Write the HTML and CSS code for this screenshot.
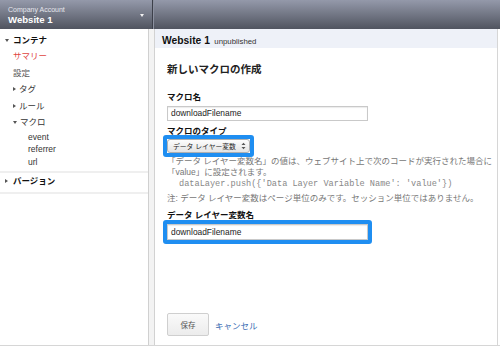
FILE: index.html
```html
<!DOCTYPE html>
<html lang="ja">
<head>
    <meta charset="UTF-8">
    <title>新しいマクロの作成</title>
    <link rel="stylesheet" href="styles.css">
</head>
<body>
    <div class="app">
        <header class="topbar">
            <div class="account">
                <div class="account-text">
                    <div class="account-label">Company Account</div>
                    <div class="account-name">Website 1</div>
                </div>
                <span class="caret"></span>
            </div>
            <div class="topbar-rest"></div>
        </header>
        <div class="layout">
            <nav class="sidebar">
                <ul class="nav">
                    <li class="nav-item head"><span class="tri down"></span>コンテナ</li>
                    <li class="nav-item sub active">サマリー</li>
                    <li class="nav-item sub light">設定</li>
                    <li class="nav-item sub"><span class="tri right"></span>タグ</li>
                    <li class="nav-item sub"><span class="tri right"></span>ルール</li>
                    <li class="nav-item sub"><span class="tri down"></span>マクロ</li>
                </ul>
                <ul class="nav-leaf">
                    <li>event</li>
                    <li>referrer</li>
                    <li>url</li>
                </ul>
                <div class="nav-sep"></div>
                <ul class="nav">
                    <li class="nav-item head"><span class="tri right"></span>バージョン</li>
                </ul>
                <div class="nav-sep"></div>
            </nav>
            <div class="gutter"></div>
            <main class="main">
                <div class="subhead"><b>Website 1</b> <span>unpublished</span></div>
                <div class="form">
                    <h1 class="form-title">新しいマクロの作成</h1>
                    <div class="field-label first">マクロ名</div>
                    <div class="text-input">downloadFilename</div>
                    <div class="field-label">マクロのタイプ</div>
                    <div class="highlight">
                        <div class="select">
                            <span>データ レイヤー変数</span>
                            <svg width="5" height="8" viewBox="0 0 5 8">
                                <path d="M0.5 3 L2.5 0.8 L4.5 3 Z M0.5 5 L2.5 7.2 L4.5 5 Z" fill="#555"/>
                            </svg>
                        </div>
                    </div>
                    <div class="help">
                        「データ レイヤー変数名」の値は、ウェブサイト上で次のコードが実行された場合に<br>
                        「value」に設定されます。
                        <div class="code">dataLayer.push({'Data Layer Variable Name': 'value'})</div>
                        <div class="note">注: データ レイヤー変数はページ単位のみです。セッション単位ではありません。</div>
                    </div>
                    <div class="field-label second">データ レイヤー変数名</div>
                    <div class="highlight wide">
                        <div class="text-input">downloadFilename</div>
                    </div>
                    <div class="actions">
                        <button class="btn">保存</button>
                        <a class="link" href="#">キャンセル</a>
                    </div>
                </div>
            </main>
        </div>
    </div>
</body>
</html>
```

FILE: styles.css
```css
body {
    margin: 0;
    font-family: "Liberation Sans", "Noto Sans CJK JP", sans-serif;
    color: #333;
    background-color: white;
}
.app {
    width: 500px;
    height: 347px;
    overflow: hidden;
}
.topbar {
    display: flex;
    height: 29px;
    background: linear-gradient(#9499aa, #50545f);
}
.account {
    width: 153px;
    display: flex;
    justify-content: space-between;
    align-items: center;
    padding: 0 8px;
    box-sizing: border-box;
    border-right: 1px solid #3d404a;
}
.account-label {
    font-size: 7px;
    line-height: 9px;
    color: #e6e7ee;
    margin-top: 1px;
}
.account-name {
    font-size: 9.6px;
    line-height: 11px;
    font-weight: bold;
    color: white;
}
.caret {
    width: 0;
    height: 0;
    border-left: 2.5px solid transparent;
    border-right: 2.5px solid transparent;
    border-top: 3px solid #f2f2f2;
    margin-top: 2px;
}
.topbar-rest {
    flex: 1;
    border-left: 1px solid #8c91a0;
}
.layout {
    display: flex;
    height: 317px;
    box-sizing: border-box;
    border-bottom: 1px solid #d6d6d6;
}
.sidebar {
    width: 149px;
    box-sizing: border-box;
    border-right: 1px solid #d0d0d0;
    padding-top: 3px;
}
.gutter {
    width: 5px;
    background-color: #f3f3f3;
}
.nav, .nav-leaf {
    list-style: none;
    margin: 0;
    padding: 0;
}
.nav-item {
    font-size: 8.5px;
    line-height: 16.5px;
    color: #333;
    padding-left: 13px;
    display: flex;
    align-items: center;
}
.nav-item.head {
    padding-left: 5px;
    font-weight: bold;
    color: #111;
    line-height: 16px;
}
.nav-item.active { color: #e0453f; }
.nav-item.light { color: #555; }
.tri {
    width: 0;
    height: 0;
    margin-right: 3px;
}
.tri.down {
    border-left: 2px solid transparent;
    border-right: 2px solid transparent;
    border-top: 3px solid #555;
}
.tri.right {
    border-top: 2px solid transparent;
    border-bottom: 2px solid transparent;
    border-left: 3px solid #555;
    margin-right: 3px;
}
.nav-item.head .tri.down { margin-right: 4px; }
.nav-item.head .tri.right { margin-right: 5px; }
.nav-leaf {
    padding-left: 28px;
}
.nav-leaf li {
    font-size: 8.5px;
    line-height: 12.5px;
    color: #333;
}
.nav-sep {
    height: 2px;
    background-color: #efefef;
    margin-top: 3px;
}
.main {
    flex: 1;
    margin-right: 2px;
    border-left: 1px solid #d2d2d2;
    border-right: 1px solid #d6d6d6;
}
.subhead {
    height: 19px;
    line-height: 19px;
    background-color: #eef1f8;
    padding-left: 7px;
    color: #111;
}
.subhead b {
    font-size: 10.3px;
}
.subhead span {
    font-size: 7.8px;
    color: #333;
}
.form {
    padding-left: 12px;
}
.form-title {
    font-size: 10.5px;
    line-height: 16px;
    font-weight: bold;
    color: #222;
    margin: 13px 0 0 0;
}
.field-label {
    font-size: 8.5px;
    line-height: 12px;
    font-weight: bold;
    color: #111;
    margin-top: 4px;
}
.field-label.first { margin-top: 14px; }
.field-label.second { margin-top: 5px; }
.text-input {
    width: 201px;
    height: 15px;
    box-sizing: border-box;
    border: 1px solid #c9c9c9;
    box-shadow: inset 0 1px 1px rgba(0, 0, 0, 0.08);
    font-size: 8.4px;
    line-height: 13px;
    padding-left: 3px;
    color: #222;
    margin-top: 3px;
    background-color: white;
}
.highlight {
    position: relative;
    z-index: 1;
    display: inline-block;
    vertical-align: top;
    border: 4px solid #1f8ef1;
    border-radius: 3px;
    margin-left: -4px;
    margin-top: -2px;
    background-color: white;
}
.highlight.wide {
    display: block;
    width: 201px;
    margin-top: -1px;
}
.highlight .text-input {
    height: 16px;
    margin-top: 0;
    line-height: 14px;
}
.select {
    width: 83px;
    height: 14px;
    box-sizing: border-box;
    border: 1px solid #b0b0b0;
    border-radius: 3px;
    background: linear-gradient(#fdfdfd, #e4e4e4);
    display: flex;
    align-items: center;
    justify-content: space-between;
    padding: 0 3px 0 5px;
    font-size: 6.8px;
    color: #222;
    white-space: nowrap;
}
.help {
    font-size: 8.5px;
    line-height: 11px;
    color: #777;
    margin-top: -1px;
    white-space: nowrap;
}
.code {
    font-family: "Liberation Mono", monospace;
    font-size: 8.6px;
    color: #888;
    padding-left: 12px;
    margin-top: 1px;
}
.note {
    margin-top: 3px;
}
.actions {
    display: flex;
    align-items: center;
    margin-top: 69px;
}
.btn {
    width: 42px;
    height: 23px;
    font-family: inherit;
    font-size: 7.5px;
    color: #555;
    border: 1px solid #cfcfcf;
    border-radius: 2px;
    background: linear-gradient(#fafafa, #ececec);
    padding: 0;
}
.link {
    font-size: 8.5px;
    color: #3b6db3;
    text-decoration: none;
    margin-left: 6px;
}
```
